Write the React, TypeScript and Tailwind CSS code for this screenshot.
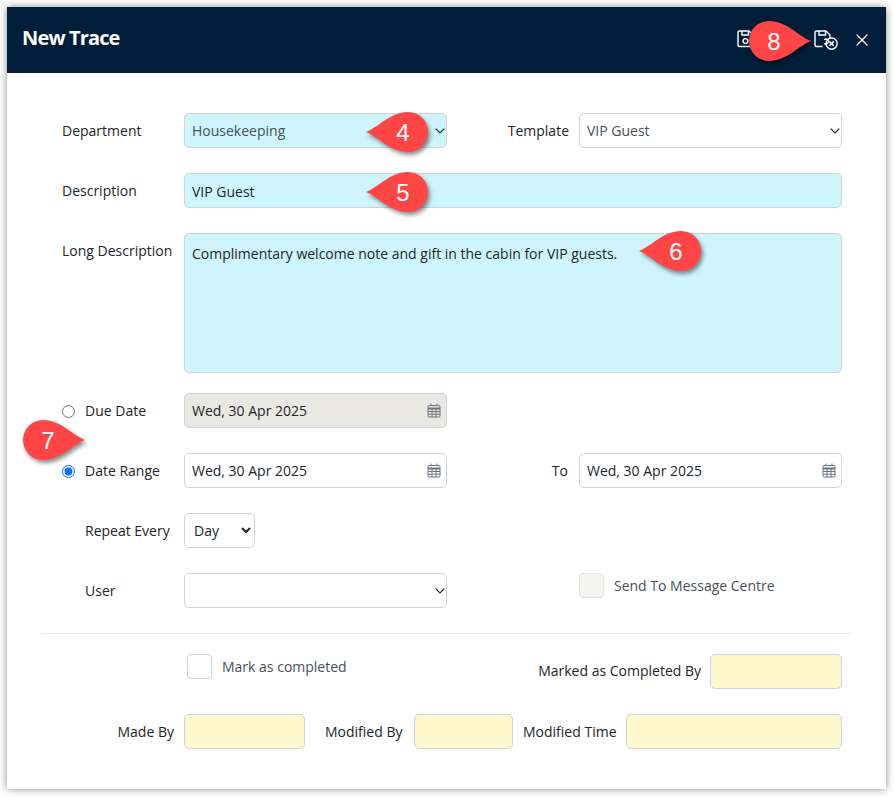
import React from "react";
import { X } from "lucide-react";

const field = "h-[35px] rounded-[5px] border border-[#ced4da] px-[7px] text-[14px] text-[#212529] outline-none";
const selectField = "h-[35px] w-full appearance-none rounded-[5px] border border-[#ced4da] pl-[7px] pr-[24px] text-[14px] outline-none";

function Callout({ n, className, right }: { n: string; className: string; right?: boolean }) {
  return (
    <div className={"absolute h-[40px] w-[62px] " + className}>
      <svg width="62" height="40" viewBox="0 0 62 40" className="absolute left-0 top-0 overflow-visible drop-shadow-[2px_3px_2px_rgba(0,0,0,0.45)]">
        <path
          transform={right ? "translate(62 0) scale(-1 1)" : undefined}
          d="M0 20C13 15 24 0 42 0A20 20 0 0 1 42 40C24 40 13 25 0 20Z"
          fill="#ff4545"
        />
      </svg>
      <span className={"absolute top-[1px] flex h-[40px] w-[50px] items-center justify-center font-['Liberation_Sans',sans-serif] text-[24px] text-white " + (right ? "left-0" : "right-0")}>
        {n}
      </span>
    </div>
  );
}

function Calendar() {
  return (
    <svg width="14" height="15" viewBox="0 0 14 15" fill="none" stroke="#6c757d" strokeWidth="1" className="absolute right-[6px] top-[10px]">
      <rect x="1" y="2.5" width="12" height="11.5" rx="1" />
      <path d="M1 5.5H13" strokeWidth="2" />
      <path d="M1 8.5H13M1 11.2H13M5 6V14M9 6V14M4 .5V3M10 .5V3" />
    </svg>
  );
}

function Chevron() {
  return (
    <svg width="10" height="6" viewBox="0 0 10 6" fill="none" stroke="#212529" strokeWidth="1.2" className="pointer-events-none absolute right-[2px] top-[15px]">
      <path d="M.7.7L5 5L9.3.7" />
    </svg>
  );
}

function DateField({ bg }: { bg?: string }) {
  return (
    <div className="relative w-[263px]">
      <input
        readOnly
        value="Wed, 30 Apr 2025"
        className={field + " w-full " + (bg ?? "bg-white")}
      />
      <Calendar />
    </div>
  );
}

function Save({ cancel }: { cancel?: boolean }) {
  return (
    <svg width="24" height="20" viewBox="0 0 24 20" fill="none" stroke="white" strokeWidth="1.4">
      <path d="M2.5 1H12L16 5V9M8.5 16.5H2.5A1.5 1.5 0 0 1 1 15V2.5A1.5 1.5 0 0 1 2.5 1" strokeLinejoin="round" />
      <path d="M5 1V5H11.5V1" />
      {cancel ? (
        <>
          <path d="M10.2 13.4A2.5 2.5 0 1 0 10.2 9.8" />
          <circle cx="17.6" cy="13.6" r="5.6" />
          <path d="M15.4 11.4L19.8 15.8M19.8 11.4L15.4 15.8" strokeWidth="1.6" />
        </>
      ) : (
        <>
          <circle cx="8.5" cy="11" r="2.4" />
          <path d="M16 9V15A1.5 1.5 0 0 1 14.5 16.5H8.5" />
        </>
      )}
    </svg>
  );
}

export default function App() {
  return (
    <div className="h-[797px] w-[894px] bg-white pl-[7px] pt-[7px] font-['Open_Sans',sans-serif] text-[14px] text-[#212529]">
      <div className="relative h-[782px] w-[879px] bg-white shadow-[0_0_8px_rgba(0,0,0,0.45)]">
        <header className="flex h-[66px] items-center bg-[#001e3a] pl-[15px] pr-[14px] text-white">
          <h1 className="mb-[5px] text-[20px] font-bold tracking-[-0.85px]">New Trace</h1>
          <div className="ml-auto flex items-center">
            <span className="mr-[53px] flex"><Save /></span>
            <span className="mr-[14px] flex"><Save cancel /></span>
            <X size={20} strokeWidth={1.5} />
          </div>
        </header>

        <div className="px-[34px] pt-[40px]">
          <div className="flex flex-col gap-[25px] pl-[21px] pr-[10px]">
            <div className="flex items-center">
              <label className="w-[122px]">Department</label>
              <div className="relative w-[263px]">
                <select defaultValue="h" className={selectField + " bg-[#cef5fb] text-[#495057]"}>
                  <option value="h">Housekeeping</option>
                </select>
                <Chevron />
              </div>
              <label className="ml-auto mr-[10px]">Template</label>
              <div className="relative w-[263px]">
                <select defaultValue="v" className={selectField + " bg-white text-[#495057]"}>
                  <option value="v">VIP Guest</option>
                </select>
                <Chevron />
              </div>
            </div>

            <div className="flex items-center">
              <label className="w-[122px]">Description</label>
              <input readOnly value="VIP Guest" className={field + " flex-1 bg-[#cef5fb] pt-[1px]"} />
            </div>

            <div className="-mb-[5px] flex items-start">
              <label className="w-[122px] pt-[7px]">Long Description</label>
              <textarea
                readOnly
                value="Complimentary welcome note and gift in the cabin for VIP guests."
                className="block h-[140px] flex-1 resize-none rounded-[5px] border border-[#ced4da] bg-[#cef5fb] px-[7px] py-[9px] text-[14px] leading-[21px] outline-none"
              />
            </div>

            <div className="flex items-center">
              <label className="flex w-[122px] items-center">
                <input type="radio" name="d" className="m-0 mr-[10px] mt-[2px] h-[13px] w-[13px]" />
                Due Date
              </label>
              <DateField bg="bg-[#e9e8e2] border-[#b8b8b2]" />
            </div>

            <div className="flex items-center">
              <label className="flex w-[122px] items-center">
                <input type="radio" name="d" defaultChecked className="m-0 mr-[10px] mt-[2px] h-[13px] w-[13px] accent-[#0d6efd]" />
                Date Range
              </label>
              <DateField />
              <label className="ml-auto mr-[11px]">To</label>
              <DateField />
            </div>

            <div className="flex items-center">
              <label className="w-[122px] pl-[23px]">Repeat Every</label>
              <select defaultValue="d" className="h-[35px] w-[71px] rounded-[5px] border border-[#ced4da] bg-white pl-[5px] text-[14px] outline-none">
                <option value="d">Day</option>
              </select>
            </div>

            <div className="flex items-start">
              <label className="w-[122px] pl-[23px] pt-[7px]">User</label>
              <div className="relative w-[263px]">
                <select defaultValue="" className={selectField + " bg-white"}>
                  <option value=""></option>
                </select>
                <Chevron />
              </div>
              <span className="ml-[132px] h-[25px] w-[25px] rounded-[4px] border border-[#e6e6e1] bg-[#f4f4f0]" />
              <span className="ml-[10px] mt-[2px] text-[#495057]">Send To Message Centre</span>
            </div>
          </div>

          <hr className="mt-[25px] border-t border-[#e8e8e8]" />

          <div className="flex flex-col gap-[25px] pl-[21px] pr-[10px] pt-[20px]">
            <div className="flex items-start">
              <span className="ml-[125px] h-[25px] w-[25px] rounded-[4px] border border-[#ced4da] bg-white" />
              <span className="ml-[10px] mt-[2px] text-[#495057]">Mark as completed</span>
              <label className="ml-auto mr-[9px] mt-[6px] whitespace-nowrap">Marked as Completed By</label>
              <input readOnly className={field + " w-[132px] bg-[#fef8cf]"} />
            </div>
            <div className="flex items-center">
              <label className="mb-[1px] w-[112px] text-right">Made By</label>
              <input readOnly className={field + " ml-[10px] w-[121px] bg-[#fef8cf]"} />
              <label className="ml-[20px] w-[78px] whitespace-nowrap">Modified By</label>
              <input readOnly className={field + " ml-[11px] w-[99px] bg-[#fef8cf]"} />
              <label className="ml-[10px] w-[94px] whitespace-nowrap">Modified Time</label>
              <input readOnly className={field + " ml-[9px] flex-1 bg-[#fef8cf]"} />
            </div>
          </div>
        </div>

        <Callout n="4" className="left-[359px] top-[105px]" />
        <Callout n="5" className="left-[359px] top-[165px]" />
        <Callout n="6" className="left-[632px] top-[224px]" />
        <Callout n="7" right className="left-[16px] top-[413px]" />
        <Callout n="8" right className="left-[742px] top-[14px]" />
      </div>
    </div>
  );
}
